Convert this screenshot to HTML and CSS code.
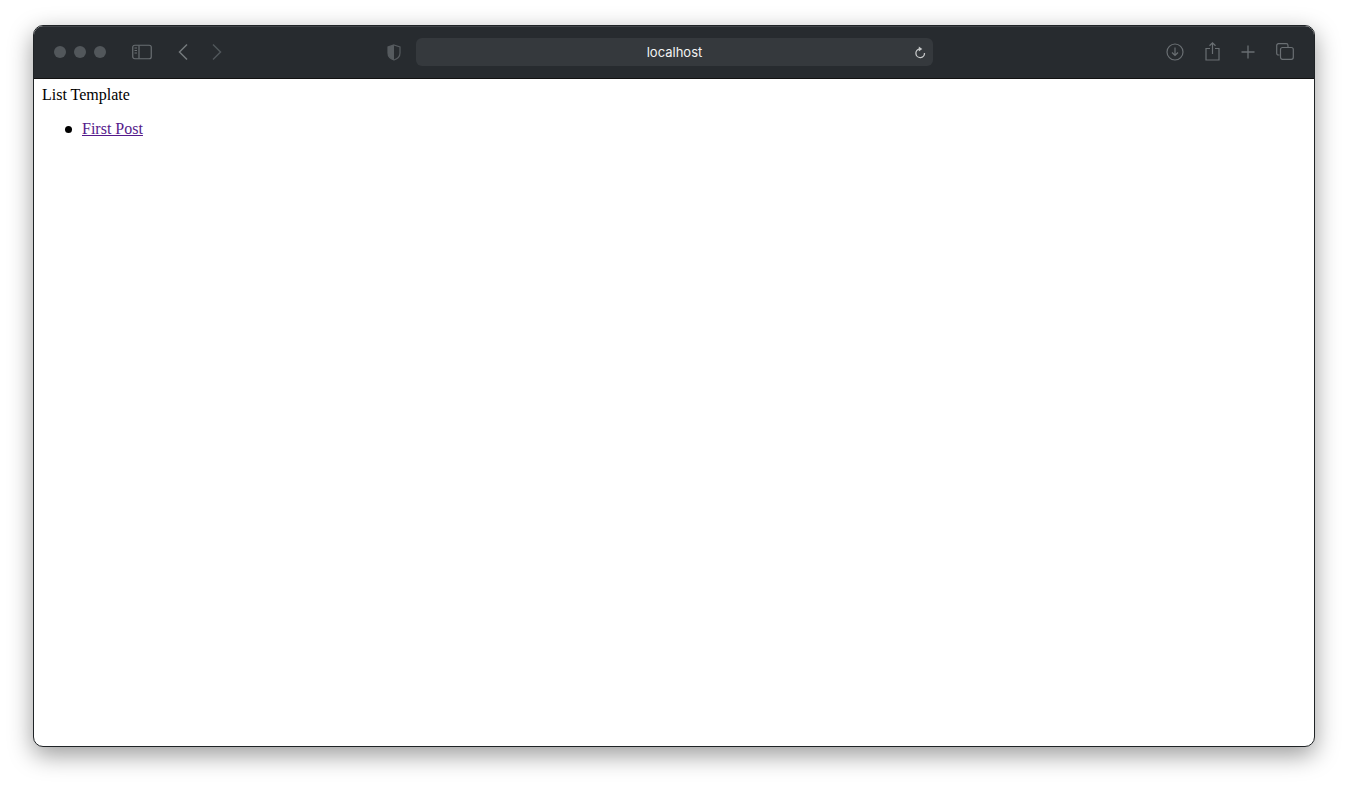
FILE: index.html
```html
<!DOCTYPE html>
<html lang="en">
<head>
  <meta charset="UTF-8">
  <title>List Template</title>
  <link rel="stylesheet" href="styles.css">
</head>
<body>
  <div class="window">
    <div class="toolbar">
      <!-- traffic lights -->
      <div class="lights">
        <span class="light"></span>
        <span class="light"></span>
        <span class="light"></span>
      </div>

      <svg class="icon sidebar-icon" width="20" height="16" viewBox="0 0 20 16">
        <rect x="0.75" y="1.25" width="18.5" height="13.5" rx="2" fill="none" stroke="#6a6f73" stroke-width="1.2"/>
        <path d="M7 1.5V14.5" stroke="#6a6f73" stroke-width="1.2"/>
        <path d="M2.5 4H5M2.5 6.5H5M2.5 9H5" stroke="#6a6f73" stroke-width="1.2"/>
      </svg>

      <svg class="icon back-icon" width="12" height="18" viewBox="0 0 12 18">
        <path d="M10 1.5L2.5 9L10 16.5" fill="none" stroke="#74797c" stroke-width="1.5"/>
      </svg>
      <svg class="icon forward-icon" width="12" height="18" viewBox="0 0 12 18">
        <path d="M2 1.5L9.5 9L2 16.5" fill="none" stroke="#50565a" stroke-width="1.5"/>
      </svg>

      <svg class="icon shield-icon" width="14" height="17" viewBox="0 0 14 17">
        <path d="M7 1L13 3V9C13 12.500 10 15 7 16C4 15 1 12.500 1 9V3Z" fill="none" stroke="#565b5f" stroke-width="1.2"/>
        <path d="M7 1L1 3V9C1 12.500 4 15 7 16Z" fill="#565b5f"/>
      </svg>

      <div class="address-bar">
        <span class="address">localhost</span>
        <svg class="reload-icon" width="12" height="13" viewBox="0 0 12 13">
          <path d="M5.500 3A4.300 4.300 0 1 0 10.500 7" fill="none" stroke="#c6c8c9" stroke-width="1.3"/>
          <path d="M4.800 0.500L8.300 3L4.800 5.500Z" fill="#c6c8c9"/>
        </svg>
      </div>

      <div class="actions">
        <svg width="18" height="18" viewBox="0 0 18 18">
          <circle cx="9" cy="9" r="8" fill="none" stroke="#6a6f73" stroke-width="1.2"/>
          <path d="M9 4.500V12.500M6 9.500L9 12.500L12 9.500" fill="none" stroke="#6a6f73" stroke-width="1.2"/>
        </svg>
        <svg width="15" height="19" viewBox="0 0 15 19">
          <path d="M5 6.500H1V18H14V6.500H10" fill="none" stroke="#6a6f73" stroke-width="1.2"/>
          <path d="M7.500 12V1M4.500 3.800L7.500 0.900L10.500 3.800" fill="none" stroke="#6a6f73" stroke-width="1.2"/>
        </svg>
        <svg width="14" height="14" viewBox="0 0 14 14">
          <path d="M7 0.500V13.500M0.500 7H13.500" stroke="#6a6f73" stroke-width="1.3"/>
        </svg>
        <svg width="18" height="17" viewBox="0 0 18 17">
          <path d="M3.500 12H2.500A1.800 1.800 0 0 1 0.700 10.200V2.500A1.800 1.800 0 0 1 2.500 0.700H10.200A1.800 1.800 0 0 1 12 2.500V4" fill="none" stroke="#6a6f73" stroke-width="1.2"/>
          <rect x="4.500" y="4.500" width="12.800" height="11.800" rx="2" fill="none" stroke="#6a6f73" stroke-width="1.2"/>
        </svg>
      </div>
    </div>

    <div class="page">
      List Template
      <ul>
        <li><a href="#">First Post</a></li>
      </ul>
    </div>
  </div>
</body>
</html>
```
FILE: styles.css
```css
html, body { height: 100%; }
body {
  margin: 0;
  padding: 25px 33px 0;
  background: #fff;
  overflow: hidden;
  box-sizing: border-box;
}
.window {
  width: 1282px;
  height: 722px;
  box-sizing: border-box;
  border: 1px solid #1f2326;
  border-radius: 10px;
  background: #fff;
  overflow: hidden;
  box-shadow: 0 8px 24px rgba(0, 0, 0, 0.4);
  display: flex;
  flex-direction: column;
}
.toolbar {
  height: 53px;
  flex: none;
  box-sizing: border-box;
  padding: 0 20px;
  background: #272b2f;
  border-bottom: 1px solid #111;
  box-shadow: inset 0 1px 0 rgba(255, 255, 255, 0.12);
  display: flex;
  align-items: center;
}
.icon { flex: none; display: block; }
.lights { display: flex; gap: 8px; }
.light {
  width: 12px;
  height: 12px;
  border-radius: 50%;
  background: #52575b;
}
.sidebar-icon { margin-left: 26px; }
.back-icon { margin-left: 25px; }
.forward-icon { margin-left: 22px; }
.shield-icon { margin-left: 164px; }
.address-bar {
  width: 517px;
  height: 28px;
  margin-left: 15px;
  background: #35393d;
  border-radius: 6px;
  display: flex;
  align-items: center;
  justify-content: center;
  position: relative;
}
.address {
  font-family: "Inter", "Liberation Sans", sans-serif;
  font-size: 13px;
  color: #f2f3f3;
}
.reload-icon {
  position: absolute;
  right: 7px;
  top: 8px;
}
.actions {
  margin-left: auto;
  display: flex;
  align-items: center;
  gap: 21px;
  padding-bottom: 1px;
}
.page {
  flex: 1;
  padding: 7px 8px 8px;
  font-family: "Liberation Serif", serif;
  font-size: 16px;
  line-height: 18px;
  color: #000;
}
.page ul { margin: 16px 0; list-style: none; padding-left: 40px; }
.page li { position: relative; }
.page li::before {
  content: "";
  position: absolute;
  left: -17px;
  top: 6px;
  width: 7px;
  height: 7px;
  border-radius: 50%;
  background: #000;
}
.page a { color: #551a8b; }
```
